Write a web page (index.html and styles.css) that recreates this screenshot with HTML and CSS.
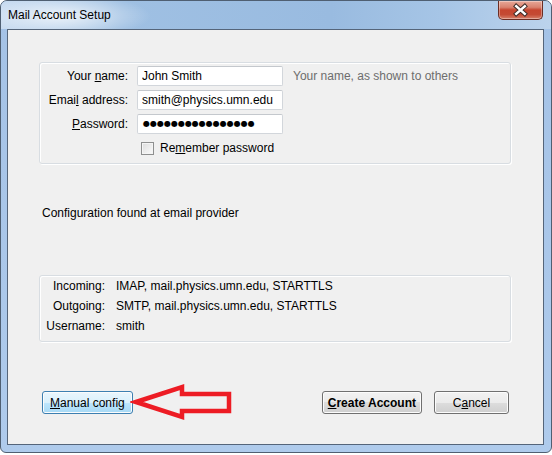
FILE: index.html
```html
<!DOCTYPE html>
<html>
<head>
    <meta charset="UTF-8">
    <title>Mail Account Setup</title>
    <link rel="stylesheet" href="styles.css">
</head>
<body>

<div class="window">
    <div class="titlebar">
        <span class="title">Mail Account Setup</span>
        <span class="close-btn">
            <svg width="45" height="19" viewBox="0 0 45 19">
                <path d="M18 5 L27 13 M27 5 L18 13" stroke="#3b2a26" stroke-width="4.6" stroke-linecap="square"/>
                <path d="M18 5 L27 13 M27 5 L18 13" stroke="#ffffff" stroke-width="2.6" stroke-linecap="square"/>
            </svg>
        </span>
    </div>

    <div class="client">
        <div class="panel identity">
            <div class="form-grid">
                <label class="lbl">Your <u>n</u>ame:</label>
                <input class="field" type="text" value="John Smith" spellcheck="false" autocomplete="off">
                <span class="hint">Your name, as shown to others</span>

                <label class="lbl">Emai<u>l</u> address:</label>
                <input class="field" type="text" value="smith@physics.umn.edu" spellcheck="false" autocomplete="off">
                <span></span>

                <label class="lbl"><u>P</u>assword:</label>
                <div class="field dots">●●●●●●●●●●●●●●●●</div>
                <span></span>
            </div>
            <div class="remember">
                <span class="checkbox"></span>
                <span>Re<u>m</u>ember password</span>
            </div>
        </div>

        <p class="status">Configuration found at email provider</p>

        <div class="panel summary">
            <div class="summary-grid">
                <span class="lbl">Incoming:</span>
                <span>IMAP, mail.physics.umn.edu, STARTTLS</span>
                <span class="lbl">Outgoing:</span>
                <span>SMTP, mail.physics.umn.edu, STARTTLS</span>
                <span class="lbl">Username:</span>
                <span>smith</span>
            </div>
        </div>

        <div class="actions">
            <button class="btn btn-hot"><u>M</u>anual config</button>
            <svg class="arrow" width="104" height="40" viewBox="0 0 104 40">
                <polygon points="6,20 52,5 52,12 99,12 99,29 52,29 52,35" fill="none" stroke="#ed1c24" stroke-width="4.5" stroke-linejoin="miter"/>
            </svg>
            <span class="spacer"></span>
            <button class="btn btn-default"><u>C</u>reate Account</button>
            <button class="btn">C<u>a</u>ncel</button>
        </div>
    </div>
</div>

</body>
</html>
```

FILE: styles.css
```css
body {
    margin: 0;
    background: #ffffff;
    font-family: "Liberation Sans", Arial, sans-serif;
    font-size: 12px;
    color: #000000;
}

.window {
    width: 552px;
    height: 453px;
    box-sizing: border-box;
    border: 1px solid #4f5f72;
    border-radius: 7px 7px 6px 6px;
    background: linear-gradient(to bottom, #a4c2e6, #afcbec);
    display: flex;
    flex-direction: column;
    overflow: hidden;
}

.titlebar {
    height: 28px;
    display: flex;
    align-items: flex-start;
    justify-content: space-between;
    background:
        radial-gradient(ellipse 90px 22px at 60px 15px, rgba(255, 255, 255, 0.75), rgba(255, 255, 255, 0) 100%),
        linear-gradient(to right, #c3d8ef 0%, #9fc0e3 22%, #99bbe0 60%, #a6c5e6 80%, #bcd3ec 100%);
}

.title {
    padding-left: 7px;
    line-height: 28px;
    color: #000000;
}

.close-btn {
    width: 45px;
    height: 19px;
    margin-right: 8px;
    box-sizing: border-box;
    border: 1px solid #6b2d24;
    border-top: none;
    border-radius: 0 0 5px 5px;
    background: linear-gradient(to bottom, #e8a898 0%, #d9826f 35%, #c6452f 50%, #c44a34 75%, #d6806a 100%);
    box-shadow: inset 0 0 0 1px rgba(255, 255, 255, 0.35);
    display: flex;
}

.client {
    height: 416px;
    margin: 0 7px 0 6px;
    box-sizing: border-box;
    border: 1px solid #55657a;
    background: #f0f0f0;
    display: flex;
    flex-direction: column;
}

.panel {
    margin-left: 31px;
    width: 472px;
    box-sizing: border-box;
    border: 1px solid #d8dde2;
    border-radius: 3px;
    box-shadow: inset 1px 1px 0 #ffffff, 1px 1px 0 #ffffff;
}

.identity {
    margin-top: 32px;
    padding: 3px 0 7px 0;
}

.form-grid {
    display: grid;
    grid-template-columns: 88px 146px auto;
    grid-auto-rows: 20px;
    column-gap: 9px;
    row-gap: 4px;
    align-items: center;
}

.lbl {
    text-align: right;
}

.field {
    height: 20px;
    box-sizing: border-box;
    border: 1px solid #d2d6db;
    border-top-color: #c4c8cd;
    border-radius: 2px;
    background: #ffffff;
    padding: 0 4px;
    font-family: "Liberation Sans", Arial, sans-serif;
    font-size: 12px;
    color: #000000;
    outline: none;
}

.dots {
    font-family: "DejaVu Sans", sans-serif;
    font-size: 8px;
    line-height: 18px;
    letter-spacing: 0;
    padding-left: 5px;
}

.hint {
    margin-left: 1px;
    color: #6d6d6d;
}

.remember {
    margin: 6px 0 0 101px;
    height: 16px;
    display: flex;
    align-items: center;
    gap: 6px;
}

.checkbox {
    width: 13px;
    height: 13px;
    box-sizing: border-box;
    border: 1px solid #8e8f8f;
    background: linear-gradient(135deg, #dcdcdc, #fbfbfb);
    box-shadow: inset 0 0 0 1px #f4f4f4;
}

.status {
    margin: 41px 0 0 34px;
    line-height: 16px;
}

.summary {
    margin-top: 54px;
    padding: 0 0 5px 0;
}

.summary-grid {
    display: grid;
    grid-template-columns: 65px auto;
    grid-auto-rows: 20px;
    column-gap: 11px;
    align-items: center;
}

.actions {
    position: relative;
    margin-top: 49px;
    padding: 0 34px;
    display: flex;
    align-items: center;
    gap: 12px;
}

.spacer {
    flex: 1;
}

.arrow {
    position: absolute;
    left: 122px;
    top: -9px;
}

.btn {
    height: 23px;
    min-width: 75px;
    padding: 0 7px;
    box-sizing: border-box;
    border: 1px solid #707070;
    border-radius: 3px;
    background: linear-gradient(to bottom, #f2f2f2 0%, #ebebeb 50%, #dddddd 50%, #cfcfcf 100%);
    box-shadow: inset 0 0 0 1px #fcfcfc;
    font-family: "Liberation Sans", Arial, sans-serif;
    font-size: 12px;
    color: #000000;
}

.btn-hot {
    border-color: #3c7fb1;
    background: linear-gradient(to bottom, #eaf6fd 0%, #d9f0fc 50%, #bee6fd 50%, #a7d9f5 100%);
}

.btn-default {
    padding: 0 5px;
    font-weight: bold;
}
```
